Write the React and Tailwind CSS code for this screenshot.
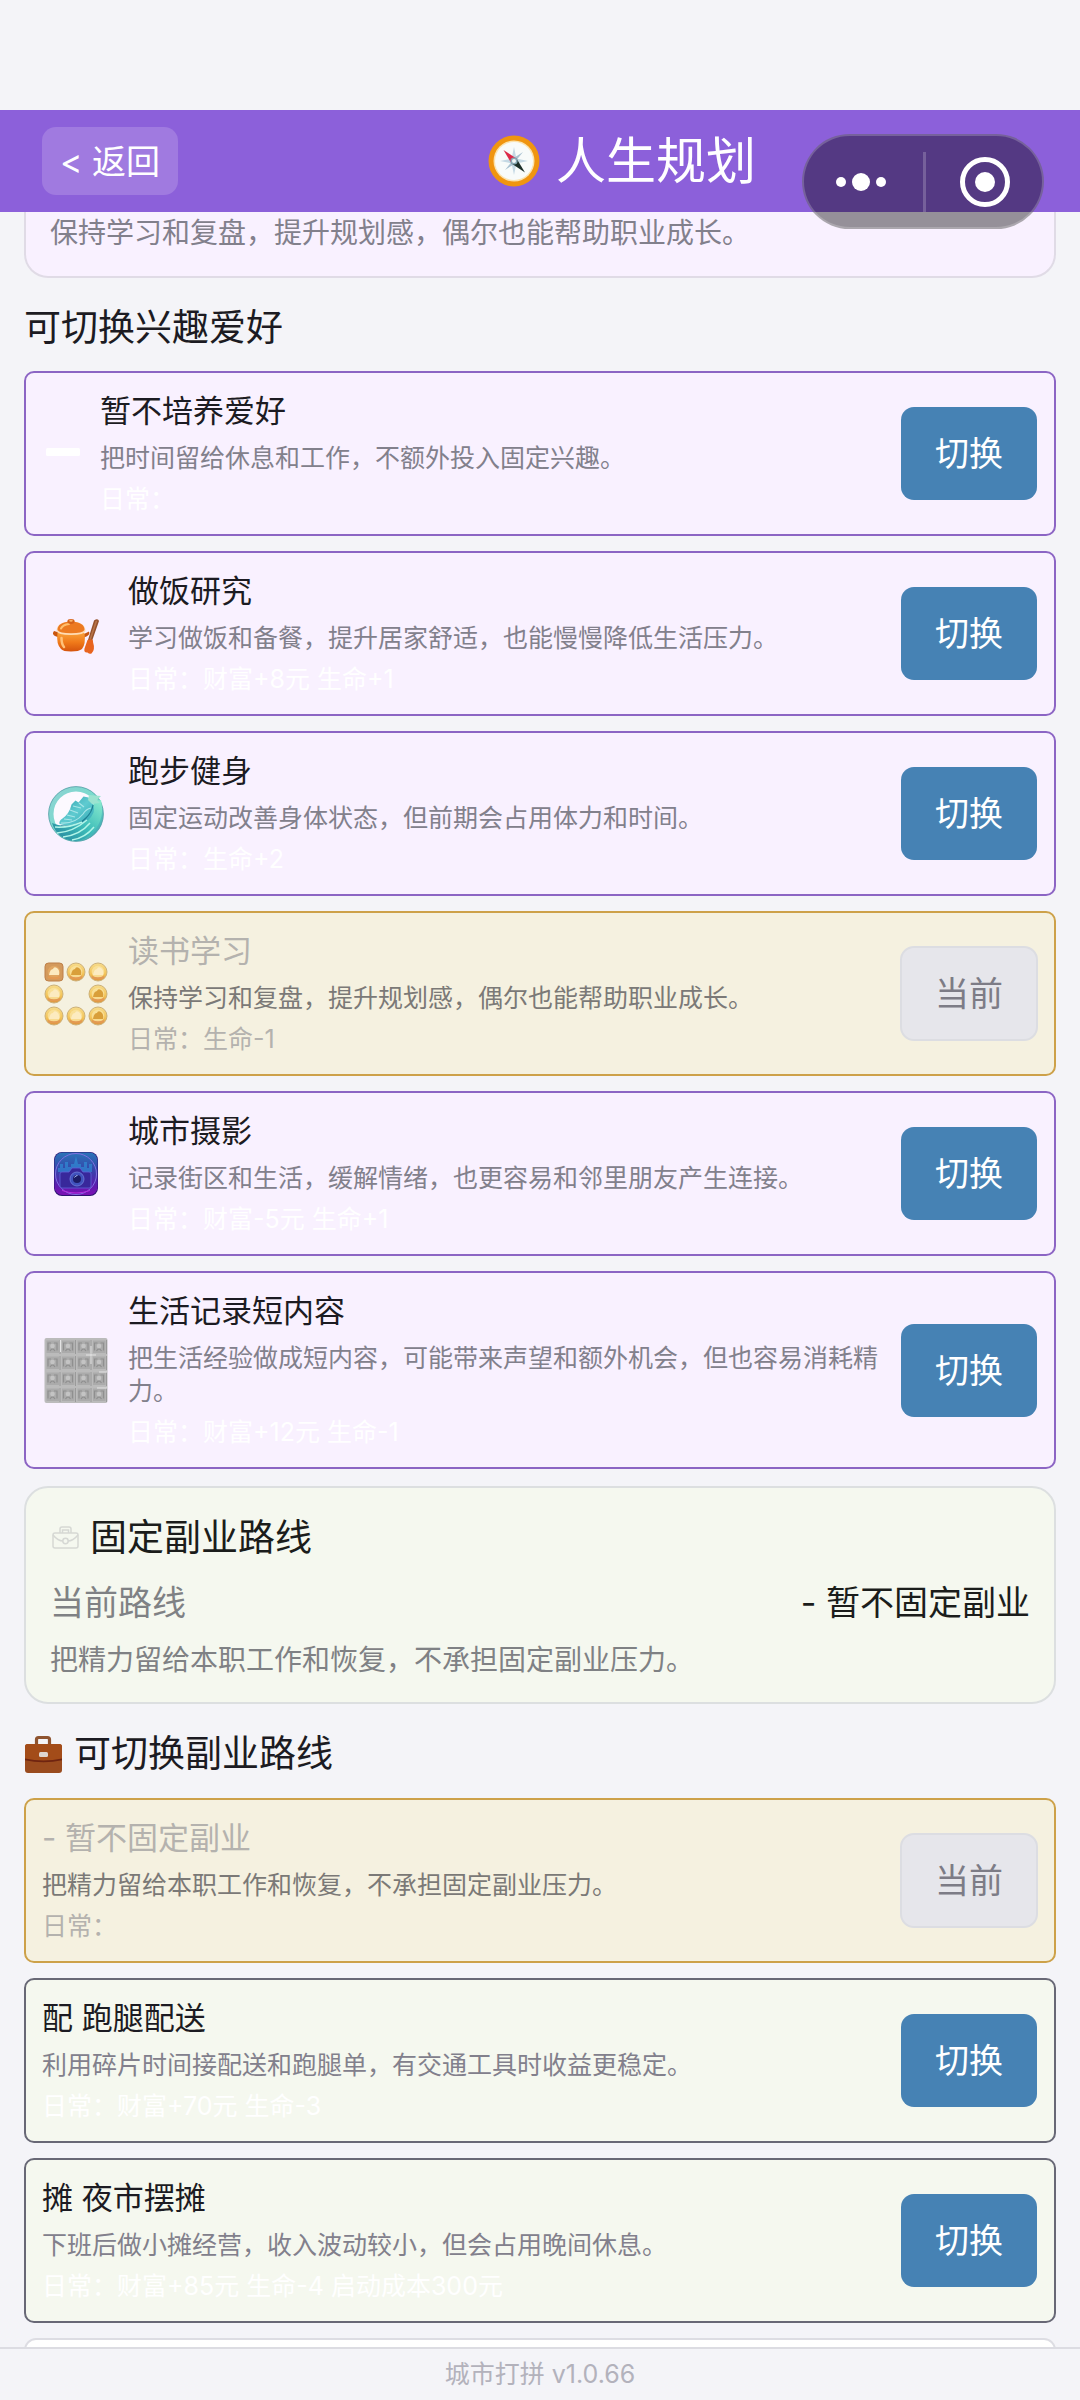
const FONT = "font-['Inter','Noto_Sans_CJK_SC',sans-serif]";

function Compass() {
  return (
    <svg viewBox="0 0 52 52" className="h-[52px] w-[52px] shrink-0" aria-hidden="true">
      <circle cx="26" cy="26" r="25.5" fill="#f0950f" />
      <circle cx="26" cy="26" r="20.5" fill="#fbe3ae" />
      <circle cx="26" cy="26" r="19" fill="#f8fbfa" />
      <path d="M26 12l2.400 11.600L26 26l-2.400-2.400zM26 40l2.400-11.600L26 26l-2.400 2.400zM12 26l11.600-2.400L26 26l-2.400 2.400zM40 26l-11.600-2.400L26 26l2.400 2.400z" fill="#c5d9e4" />
      <path d="M35 17l-6.500 8-2.500 1-1-2.500zM17 35l6.500-8 2.500-1 1 2.500z" fill="#a9c2d1" />
      <path d="M15.500 15l13 8.500-5 5z" fill="#dc2a49" />
      <path d="M37 37.500L23.500 28.500l5-5z" fill="#1d3029" />
      <circle cx="26" cy="26" r="3.600" fill="#86a6b2" />
      <circle cx="26" cy="26" r="2" fill="#f2f7f8" />
    </svg>
  );
}

function MinusIcon() {
  return (
    <svg viewBox="0 0 38 38" className="h-[38px] w-[38px] shrink-0" aria-hidden="true">
      <rect x="4" y="13" width="34" height="8" rx="1.500" fill="#fff" />
    </svg>
  );
}

function PotIcon() {
  return (
    <svg viewBox="0 0 66 66" className="h-[66px] w-[66px] shrink-0" aria-hidden="true">
      <defs>
        <linearGradient id="pot" x1="0" y1="0" x2="0" y2="1">
          <stop offset="0" stopColor="#f9a03a" />
          <stop offset=".5" stopColor="#f07a1a" />
          <stop offset="1" stopColor="#d5530d" />
        </linearGradient>
      </defs>
      <path d="M52 19.500q4-2.500 5 .500l-7 20-4-1z" fill="#94502b" />
      <path d="M53.500 20l2-.500-6.500 19-1.500-.500z" fill="#b87448" />
      <path d="M45.500 39q6-2 5.500 2 2.500 8-1.500 11.500-2 1-4-1-4 .500-3-4z" fill="#e8641f" />
      <path d="M12 30q-2.500 3 1 5l4 1.500v-5zM42 33l5-2.500q2 3.500-5 6z" fill="#c9560f" />
      <path d="M15.500 32h27q1.500 11-2.500 16-3 2.500-11 2.500T19 48q-5-5-3.500-16z" fill="url(#pot)" />
      <path d="M19.500 37q0 6 2.500 9" stroke="#ffc27a" strokeWidth="2.500" fill="none" strokeLinecap="round" />
      <path d="M14.500 30q0-9 14.500-9.500 14.500.500 14.500 9.500-1 4-14.500 4t-14.500-4z" fill="#ffdcb4" />
      <path d="M15.500 29q0-8 13.500-8.500 13.500.500 13.500 8.500-2 3.200-13.500 3.200t-13.500-3.200z" fill="#ec7a22" />
      <path d="M19 27.500q2-4 8-4.500" stroke="#ffc06e" strokeWidth="2" fill="none" strokeLinecap="round" />
      <ellipse cx="29" cy="20.500" rx="3.600" ry="2.400" fill="#d5621a" />
      <ellipse cx="29" cy="19.800" rx="1.800" ry="1" fill="#fbb56a" />
    </svg>
  );
}

function ShoeIcon() {
  return (
    <svg viewBox="0 0 66 66" className="h-[66px] w-[66px] shrink-0" aria-hidden="true">
      <defs>
        <linearGradient id="ring" x1="0" y1="0" x2="1" y2="1">
          <stop offset="0" stopColor="#8ed3d3" />
          <stop offset=".6" stopColor="#74dccc" />
          <stop offset="1" stopColor="#2f9fae" />
        </linearGradient>
        <linearGradient id="wave" x1="0" y1="1" x2="1" y2="0">
          <stop offset="0" stopColor="#24809b" />
          <stop offset=".5" stopColor="#3dbdb9" />
          <stop offset="1" stopColor="#8ceccf" />
        </linearGradient>
        <linearGradient id="shoe" x1="0" y1="0" x2="1" y2="1">
          <stop offset="0" stopColor="#2f9bab" />
          <stop offset=".5" stopColor="#5fcbd0" />
          <stop offset="1" stopColor="#2ea5b2" />
        </linearGradient>
      </defs>
      <circle cx="34" cy="33" r="25" fill="#fcf9ff" stroke="url(#ring)" strokeWidth="5" />
      <circle cx="34" cy="33" r="27.400" fill="none" stroke="#559ea6" strokeWidth=".8" />
      <path d="M10 42q9 4 19 3 19-2 23-25l7-1q4 18-7 31-8 10-20 10-17-2-22-18z" fill="url(#wave)" />
      <path d="M17.500 43q-1-3 3-5.500 7-5 9-14l4-4 3 2 5-6 5 1 2 4q5 4 3 11-4 10-16 13-11 1-18-1.500z" fill="url(#shoe)" />
      <path d="M19 42q14 1 22-9 3-5 8-6M22 38l8 1M25 34l8 2M28 29l8 3M31 25l8 2M37 22l5 4" stroke="#a9e6e8" strokeWidth="1.200" fill="none" />
      <path d="M19 45q17 1 25-8 6-6 7-13" stroke="#207f92" strokeWidth="1.200" fill="none" />
      <path d="M13 46q14 1 27-5M15 52q16-1 30-13M21 56q17-2 27-14M30 59q13-2 22-13" stroke="#b2f5e8" strokeWidth="1.500" fill="none" />
      <path d="M47 14l12 1-4 4 3 3-8 1-4-4z" fill="#9be3d0" />
    </svg>
  );
}

const COINS = [
  [12, 11], [34, 11], [56, 11],
  [12, 33], [56, 33],
  [12, 55], [34, 55], [56, 55],
];

function CoinsIcon() {
  return (
    <svg viewBox="0 0 66 66" className="h-[66px] w-[66px] shrink-0" aria-hidden="true">
      <defs>
        <linearGradient id="coin" x1="0" y1="0" x2="0" y2="1">
          <stop offset="0" stopColor="#f7dc8c" />
          <stop offset=".6" stopColor="#f3c458" />
          <stop offset="1" stopColor="#dd8f3c" />
        </linearGradient>
      </defs>
      {COINS.map(([x, y], i) => (
        <g key={i}>
          {i === 0 ? (
            <rect x="3" y="2" width="18" height="18" rx="3.500" fill="#d39a5c" stroke="#bd7f49" />
          ) : (
            <circle cx={x} cy={y} r="9" fill="url(#coin)" stroke="#cdb178" />
          )}
          <circle cx={x} cy={y} r="6.300" fill={i === 0 ? "#e3a963" : "#fae3a0"} opacity=".8" />
          <path d={`M${x - 5} ${y + 3}q1-6 4-6 1-3 4-1 3 2 2 7z`} fill={i % 3 === 1 ? "#d99f3a" : "#fcebc0"} />
          <path d={`M${x - 6} ${y + 5}q6 2.500 12 0`} stroke="#e39a52" strokeWidth="2" fill="none" />
        </g>
      ))}
    </svg>
  );
}

function CameraIcon() {
  return (
    <svg viewBox="0 0 66 66" className="h-[66px] w-[66px] shrink-0" aria-hidden="true">
      <defs>
        <linearGradient id="neon" x1="0" y1="0" x2="0" y2="1">
          <stop offset="0" stopColor="#2b74b8" />
          <stop offset=".4" stopColor="#3446ab" />
          <stop offset=".75" stopColor="#5a1fae" />
          <stop offset="1" stopColor="#7c10b4" />
        </linearGradient>
      </defs>
      <rect x="12" y="11" width="44" height="44" rx="8" fill="#2c1470" />
      <rect x="12.500" y="11.500" width="43" height="42.500" rx="8" fill="url(#neon)" />
      <circle cx="34" cy="33" r="20.500" fill="none" stroke="#7f6fe0" strokeWidth="1" />
      <path d="M16 31v-4h2v-4h3v4h2v-6h3v5h3v-3h3l2-8 2 8h3v3h3v-5h3v6h2v-4h3v8z" fill="#2f9ade" opacity=".55" />
      <path d="M18 33q0-2 2-2h7l3-4h8l3 4h6q2 0 2 2v12q0 2-2 2H20q-2 0-2-2z" fill="#38289b" stroke="#5f63d8" strokeWidth=".8" />
      <circle cx="35" cy="38" r="7" fill="#4052bd" stroke="#6f80da" strokeWidth=".8" />
      <circle cx="35" cy="38" r="4" fill="#1c1c66" />
      <path d="M32.500 36.500q1-2 3-2" stroke="#a9c2ff" strokeWidth="1" fill="none" />
      <path d="M20 49.500q14 5 28 0" stroke="#b52bdd" strokeWidth="1" fill="none" />
    </svg>
  );
}

function StoneIcon() {
  const cells = [0, 1, 2, 3];
  return (
    <svg viewBox="0 0 66 66" className="h-[66px] w-[66px] shrink-0" aria-hidden="true">
      <rect x="2.500" y="1" width="63" height="65" rx="2" fill="#bbbbbb" />
      {cells.map((r) =>
        cells.map((c) => (
          <g key={`${r}-${c}`} transform={`translate(${3 + c * 15.500} ${2 + r * 16})`}>
            <rect x="1.500" y="1.500" width="12.500" height="12.500" fill="#ababab" />
            <path d="M3 11.500V4h3M12 11.500V4H9M5 12q2.500-4 5 0" stroke="#8f8f8f" strokeWidth="1.200" fill="none" />
            <circle cx="7.500" cy="7" r="2.300" fill="#c4c4c4" />
            <path d="M15 1v14" stroke="#9a9a9a" strokeWidth="1" />
          </g>
        ))
      )}
      <path d="M49 9v18M44 18h10M57 35h8M55 51h10M18.500 3v12" stroke="#e4e4e4" strokeWidth="1" />
    </svg>
  );
}

function OutlineCase() {
  return (
    <svg viewBox="0 0 30 30" className="h-[30px] w-[30px] shrink-0" aria-hidden="true" fill="none" stroke="#d6d8d4" strokeWidth="1.500">
      <rect x="3" y="10" width="25" height="15" rx="2" />
      <path d="M10 10V6q0-2 2-2h7q2 0 2 2v4M12.500 10V7h6v3M3 12q5 6 10 6M28 12q-5 6-10 6" />
      <circle cx="15.500" cy="18" r="2.700" />
    </svg>
  );
}

function Briefcase() {
  return (
    <svg viewBox="0 0 38 38" className="h-[38px] w-[38px] shrink-0" aria-hidden="true">
      <path d="M12.500 10V4.500q0-2 2-2h9q2 0 2 2V10" fill="none" stroke="#8f5430" strokeWidth="3.200" />
      <rect x="1" y="9" width="37" height="29" rx="3" fill="#9a4b1e" />
      <path d="M1 11.500q0-2.500 2.500-2.500h32q2.500 0 2.500 2.500V24q-9 2-18.500 2T1 24z" fill="#a34c19" />
      <path d="M1 23.500q9 2 18.500 2t18.500-2v1.800q-9 2-18.500 2T1 25.300z" fill="#6f2410" />
      <rect x="15" y="17" width="9" height="5" rx="1.500" fill="#dfd6d0" />
    </svg>
  );
}

const HOBBIES = [
  { icon: MinusIcon, title: "暂不培养爱好", desc: "把时间留给休息和工作，不额外投入固定兴趣。", daily: "日常：" },
  { icon: PotIcon, title: "做饭研究", desc: "学习做饭和备餐，提升居家舒适，也能慢慢降低生活压力。", daily: "日常：财富+8元 生命+1" },
  { icon: ShoeIcon, title: "跑步健身", desc: "固定运动改善身体状态，但前期会占用体力和时间。", daily: "日常：生命+2" },
  { icon: CoinsIcon, title: "读书学习", desc: "保持学习和复盘，提升规划感，偶尔也能帮助职业成长。", daily: "日常：生命-1", current: true },
  { icon: CameraIcon, title: "城市摄影", desc: "记录街区和生活，缓解情绪，也更容易和邻里朋友产生连接。", daily: "日常：财富-5元 生命+1" },
  { icon: StoneIcon, title: "生活记录短内容", desc: "把生活经验做成短内容，可能带来声望和额外机会，但也容易消耗精力。", daily: "日常：财富+12元 生命-1" },
];

const JOBS = [
  { title: "- 暂不固定副业", desc: "把精力留给本职工作和恢复，不承担固定副业压力。", daily: "日常：", current: true },
  { title: "配 跑腿配送", desc: "利用碎片时间接配送和跑腿单，有交通工具时收益更稳定。", daily: "日常：财富+70元 生命-3" },
  { title: "摊 夜市摆摊", desc: "下班后做小摊经营，收入波动较小，但会占用晚间休息。", daily: "日常：财富+85元 生命-4 启动成本300元" },
];

function OptionCard({ item, tone }) {
  const Icon = item.icon;
  const surface = item.current
    ? "border-[#cda149] bg-[#f5f1e0]"
    : tone === "hobby"
      ? "border-[#8c65c4] bg-[#f9f1ff]"
      : "border-[#686876] bg-[#f5f8ef]";
  return (
    <li className={`flex items-center rounded-[10px] border-2 px-4 py-[18px] ${surface}`}>
      {Icon && (
        <span className="mr-5 shrink-0">
          <Icon />
        </span>
      )}
      <div className="mr-4 min-w-0 flex-1">
        <h3 className={`text-[31px] leading-[40px] ${item.current ? "text-[#b4b2ae]" : "text-[#1c1b22]"}`}>{item.title}</h3>
        <p className={`mt-[11px] text-[25px] leading-[33px] ${item.current ? "text-[#7b7977]" : "text-[#82808c]"}`}>{item.desc}</p>
        <p className={`mt-2 text-[25px] leading-[33px] ${item.current ? "text-[#b4b2ae]" : "text-white"}`}>{item.daily}</p>
      </div>
      {item.current ? (
        <button type="button" disabled className="h-[95px] w-[138px] shrink-0 rounded-[14px] border-2 border-[#dcdde2] bg-[#e6e6eb] text-[34px] text-[#7d7c86]">
          当前
        </button>
      ) : (
        <button type="button" className="h-[95px] w-[138px] shrink-0 rounded-[14px] border border-transparent bg-[#4682b4] bg-clip-padding text-[34px] text-white">
          切换
        </button>
      )}
    </li>
  );
}

export default function App() {
  return (
    <div lang="zh-CN" className={`flex h-screen flex-col overflow-hidden bg-[#f4f4f8] pt-[110px] ${FONT}`}>
      <header className="relative z-10 flex h-[102px] shrink-0 items-center gap-7 bg-[#8c60da] px-[42px] text-white">
        <button type="button" className="h-[68px] w-[136px] shrink-0 rounded-[14px] bg-[#a07ae0] text-[34px]">
          &lt; 返回
        </button>
        <h1 className="flex flex-1 items-center justify-center gap-4 text-[50px] leading-[64px]">
          <Compass />
          人生规划
        </h1>
        <div className="absolute top-6 right-9 flex h-[95px] w-[242px] items-center rounded-full border-2 border-white/20 bg-black/40 bg-clip-border">
          <button type="button" aria-label="更多" className="flex h-full flex-1 items-center justify-center gap-[6px] pr-1">
            <span className="h-[10px] w-[10px] rounded-full bg-white" />
            <span className="h-[18px] w-[18px] rounded-full bg-white" />
            <span className="h-[10px] w-[10px] rounded-full bg-white" />
          </button>
          <span className="h-[60px] w-[3px] bg-white/20" />
          <button type="button" aria-label="关闭" className="flex h-full flex-1 items-center justify-center pl-[2px]">
            <span className="flex h-[50px] w-[50px] items-center justify-center rounded-full border-5 border-white">
              <span className="h-5 w-5 rounded-full bg-white" />
            </span>
          </button>
        </div>
      </header>

      <main className="min-h-0 flex-1 overflow-hidden px-6">
        <section className="rounded-b-[24px] border-x-2 border-b-2 border-[#e0dbe6] bg-[#f9f1ff] px-6 pt-px pb-[23px]">
          <p className="text-[28px] leading-[40px] text-[#82808c]">保持学习和复盘，提升规划感，偶尔也能帮助职业成长。</p>
        </section>

        <h2 className="mt-[25px] text-[37px] leading-[50px] text-[#1c1b22]">可切换兴趣爱好</h2>
        <ul className="mt-[18px] flex flex-col gap-[15px]">
          {HOBBIES.map((item) => (
            <OptionCard key={item.title} item={item} tone="hobby" />
          ))}
        </ul>

        <section className="mt-[17px] rounded-[24px] border-2 border-[#dcdfe0] bg-[#f5f8ef] px-6 pt-[25px] pb-[22px]">
          <h2 className="flex items-center gap-[10px] text-[37px] leading-[50px] text-[#1b1d1b]">
            <OutlineCase />
            固定副业路线
          </h2>
          <div className="mt-4 flex items-center justify-between text-[34px] leading-[48px]">
            <span className="text-[#7f8184]">当前路线</span>
            <span className="text-[#1b1d1b]">- 暂不固定副业</span>
          </div>
          <p className="mt-[13px] text-[28px] leading-[40px] text-[#7f8184]">把精力留给本职工作和恢复，不承担固定副业压力。</p>
        </section>

        <h2 className="mt-[25px] flex items-center gap-3 text-[37px] leading-[50px] text-[#1c1b22]">
          <Briefcase />
          可切换副业路线
        </h2>
        <ul className="mt-[19px] flex flex-col gap-[15px]">
          {JOBS.map((item) => (
            <OptionCard key={item.title} item={item} tone="job" />
          ))}
          <li className="h-[165px] rounded-[12px] border-2 border-[#dddde3] bg-white" />
        </ul>
      </main>

      <footer className="shrink-0 border-t-2 border-[#dcdce2] bg-[#f4f4f8] text-center text-[25px] leading-[51px] text-[#b3b2bc]">
        城市打拼 v1.0.66
      </footer>
    </div>
  );
}
